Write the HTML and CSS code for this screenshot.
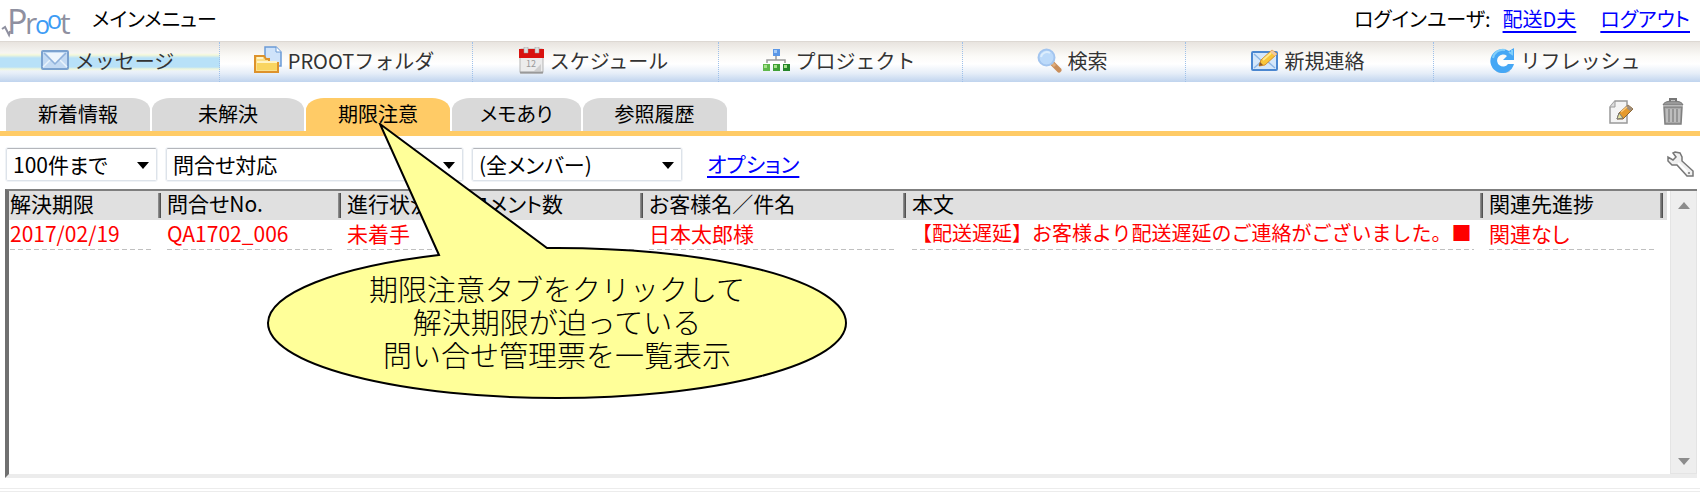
FILE: index.html
```html
<!DOCTYPE html>
<html lang="ja">
<head>
  <meta charset="UTF-8">
  <meta name="viewport" content="width=device-width, initial-scale=1.0">
  <title>Proot メインメニュー</title>
  <link rel="stylesheet" href="styles.css">
</head>
<body>
  <header class="header">
    <svg class="logo" width="72" height="36" viewBox="0 0 72 36">
      <path d="M2 28l3-2 4 8 1-4" fill="none" stroke="#8f90a0" stroke-width="2"/>
      <text x="7" y="33" font-size="34" class="logo-gray">P</text>
      <text x="25" y="33" font-size="30" class="logo-gray">r</text>
      <text x="35" y="33" font-size="25" class="logo-blue">o</text>
      <text x="47" y="28" font-size="25" class="logo-blue">o</text>
      <text x="60" y="33" font-size="30" class="logo-gray">t</text>
    </svg>
    <h1>メインメニュー</h1>
    <div class="user">
      <span>ログインユーザ:</span>
      <a href="#">配送D夫</a>
      <a href="#" class="logout">ログアウト</a>
    </div>
  </header>

  <!-- Main menu -->
  <nav class="menu">
    <a href="#" class="active">
      <svg width="28" height="20" viewBox="0 0 28 20">
        <rect x="1" y="1" width="26" height="18" rx="1" fill="#c3daf3" stroke="#7ba2cf" stroke-width="2"/>
        <path d="M2 17l8-8M26 17l-8-8" stroke="#e9f3fc" stroke-width="1.500"/>
        <path d="M5 3h18l-9 10z" fill="#eef6fd"/>
        <path d="M3 3l11 11L25 3" fill="none" stroke="#8fb1da" stroke-width="1.500"/>
      </svg>
      メッセージ
    </a>
    <a href="#">
      <svg width="28" height="28" viewBox="0 0 28 28">
        <path d="M11 1h11l5 5v14H11z" fill="#cfe3fa" stroke="#6b9bd6" stroke-width="1.500"/>
        <path d="M22 1v5h5" fill="#fff" stroke="#6b9bd6"/>
        <path d="M1 26V10h9l2 3h3v4h9v9z" fill="#fbe08a" stroke="#dd922b" stroke-width="2"/>
        <path d="M3 12h6M3 16h20" stroke="#fff3c4" stroke-width="2"/>
        <path d="M3 17h20v7H3z" fill="#f9d560"/>
      </svg>
      PROOTフォルダ
    </a>
    <a href="#">
      <svg width="25" height="27" viewBox="0 0 25 27">
        <rect x="1" y="2" width="23" height="24" rx="1" fill="#ececec" stroke="#b5b5b5"/>
        <path d="M0 2h25v9H0z" fill="#d9120f"/>
        <path d="M5 0h4v6H5zM16 0h4v6h-4z" fill="#ddd" stroke="#999" stroke-width=".5"/>
        <text x="7" y="20" font-size="9" fill="#999">12</text>
        <path d="M15 24l7-7v7z" fill="#cfcfcf"/>
        <path d="M1 25.500h23" stroke="#999" stroke-width="2"/>
      </svg>
      スケジュール
    </a>
    <a href="#">
      <svg width="28" height="24" viewBox="0 0 28 24">
        <path d="M14 8v4M5 15v-3h18v3" fill="none" stroke="#999" stroke-width="1.500"/>
        <rect x="11" y="1" width="7" height="7" fill="#5b97e6"/>
        <rect x="12" y="2" width="3" height="3" fill="#a5cbf7"/>
        <path d="M1 16h7v7H1z" fill="#5fb84a"/>
        <path d="M11 16h7v7h-7z" fill="#3fa035"/>
        <path d="M21 16h7v7h-7z" fill="#24852a"/>
        <path d="M2 17h3v3H2zM12 17h3v3h-3zM22 17h3v3h-3z" fill="#a7e08e"/>
      </svg>
      プロジェクト
    </a>
    <a href="#">
      <svg width="25" height="25" viewBox="0 0 25 25">
        <path d="M15 15l7 7" stroke="#c98e5b" stroke-width="5" stroke-linecap="round"/>
        <path d="M15 15l3 3" stroke="#e0ad7b" stroke-width="3"/>
        <circle cx="9.500" cy="9.500" r="8" fill="#bcdafa" stroke="#a3c5ef" stroke-width="2"/>
        <path d="M4 9a6 6 0 0 1 9-4" fill="none" stroke="#dcedfd" stroke-width="2"/>
      </svg>
      検索
    </a>
    <a href="#">
      <svg width="28" height="24" viewBox="0 0 28 24">
        <rect x="1" y="4" width="25" height="18" rx="1" fill="#d5e7fa" stroke="#4b87d0" stroke-width="2"/>
        <path d="M3 6l10 9L24 6M3 20l8-7M24 20l-8-7" fill="none" stroke="#8db6e6" stroke-width="1.500"/>
        <path d="M8 18l2-6L21 2l5 4-12 11z" fill="#f8c53a" stroke="#d48d2f"/>
        <path d="M21 2l5 4-2 2-5-4z" fill="#f0c9a5"/>
        <path d="M8 18l1-4 3 3z" fill="#8d5a2e"/>
        <path d="M12 12l8-7" stroke="#ffe98c" stroke-width="2"/>
      </svg>
      新規連絡
    </a>
    <a href="#">
      <svg width="25" height="26" viewBox="0 0 25 26">
        <ellipse cx="13" cy="24" rx="7" ry="2" fill="#c5ccd4"/>
        <path d="M24 1v12H13l4-4a6 6 0 1 0 1 8h6A12 12 0 1 1 19 4z" fill="#45a7f5"/>
        <path d="M22 3v4l-3-2M3 11a10 10 0 0 1 12-8" fill="none" stroke="#82cffa" stroke-width="2"/>
      </svg>
      リフレッシュ
    </a>
  </nav>

  <!-- Tabs -->
  <div class="tab-bar">
    <div class="tabs">
      <button type="button" class="tab">新着情報</button>
      <button type="button" class="tab tab-wide">未解決</button>
      <button type="button" class="tab selected">期限注意</button>
      <button type="button" class="tab tab-narrow">メモあり</button>
      <button type="button" class="tab">参照履歴</button>
    </div>
    <div class="tools">
      <button type="button" class="icon-button" aria-label="編集">
        <svg width="26" height="26" viewBox="0 0 26 26">
          <path d="M7 2h12v22H2V8z" fill="#f4f4f4" stroke="#999" stroke-width="1.500"/>
          <path d="M7 2v6H2" fill="#ddd" stroke="#999"/>
          <path d="M9 20l2-6 9-8 5 4-10 10z" fill="#e59a2c" stroke="#8a6430"/>
          <path d="M20 6l5 4-3 2-5-4z" fill="#9d8d7d"/>
          <path d="M9 20l2-6 4 5z" fill="#e5e5a0" stroke="#777"/>
          <path d="M13 13l6-5" stroke="#ffc977" stroke-width="1.500"/>
        </svg>
      </button>
      <button type="button" class="icon-button" aria-label="削除">
        <svg width="22" height="28" viewBox="0 0 22 28">
          <path d="M8 4V1h6v3" fill="none" stroke="#777" stroke-width="2"/>
          <path d="M1 7q1-4 10-4t10 4z" fill="#999" stroke="#777"/>
          <path d="M2 9h18l-1 17H3z" fill="#aaa" stroke="#808080" stroke-width="1.500"/>
          <path d="M7 11v13M11 11v13M15 11v13" stroke="#808080"/>
          <path d="M5 11v13M9 11v13M13 11v13M17 11v13" stroke="#d0d0d0"/>
        </svg>
      </button>
    </div>
  </div>

  <!-- Filters -->
  <div class="filters">
    <label class="select select-limit">
      <select aria-label="件数"><option>100件まで</option></select>
    </label>
    <label class="select select-type">
      <select aria-label="種別"><option>問合せ対応</option></select>
    </label>
    <label class="select select-member">
      <select aria-label="メンバー"><option>(全メンバー)</option></select>
    </label>
    <a href="#" class="option-link">オプション</a>
    <button type="button" class="icon-button settings" aria-label="設定">
      <svg width="27" height="27" viewBox="0 0 27 27">
        <path d="M8 1l5 1 2 4v4l11 10v5h-6L10 14H5l-4-4V6l5 3 3-3-3-4z" fill="#f0f0f0" stroke="#777" stroke-width="1.500"/>
        <path d="M11 12l9 9" stroke="#fff" stroke-width="2"/>
        <circle cx="22" cy="22" r="1" fill="#777"/>
      </svg>
    </button>
  </div>

  <!-- List -->
  <main class="list">
    <div class="list-body">
      <table>
        <thead>
          <tr>
            <th class="col-limit">解決期限</th>
            <th class="col-no">問合せNo.</th>
            <th class="col-status">進行状況</th>
            <th class="col-comment">コメント数</th>
            <th class="col-name">お客様名／件名</th>
            <th>本文</th>
            <th class="col-related">関連先進捗</th>
          </tr>
        </thead>
        <tbody>
          <tr>
            <td><div>2017/02/19</div></td>
            <td><div>QA1702_006</div></td>
            <td><div>未着手</div></td>
            <td><div></div></td>
            <td><div>日本太郎様</div></td>
            <td><div class="message">【配送遅延】お客様より配送遅延のご連絡がございました。■</div></td>
            <td><div>関連なし</div></td>
          </tr>
        </tbody>
      </table>
    </div>
    <div class="scrollbar">
      <span class="arrow-up"></span>
      <span class="arrow-down"></span>
    </div>
  </main>
  <footer class="footer"></footer>

  <!-- Callout over the list -->
  <div class="callout">
    <svg width="582" height="278" viewBox="0 0 582 278">
      <path d="M114 1L281 125A289 75 0 0 1 580 200A289 75 0 0 1 2 200A289 75 0 0 1 173 132Z" fill="#ffff99" stroke="#000" stroke-width="2"/>
    </svg>
    <p>期限注意タブをクリックして<br>解決期限が迫っている<br>問い合せ管理票を一覧表示</p>
  </div>
</body>
</html>
```

FILE: styles.css
```css
:root {
  --text-color: #000;
  --link-color: #0000ff;
  --alert-color: #ff0000;
  --tab-bg: #d9d9d9;
  --accent: #ffcb66;
  --head-bg: #e0e0e0;
}

* {
  box-sizing: border-box;
}

body {
  display: flex;
  flex-direction: column;
  position: relative;
  min-height: 100vh;
  margin: 0;
  background: #fff;
  color: var(--text-color);
  font-family: "Noto Sans CJK JP", sans-serif;
  font-size: 20px;
  font-feature-settings: "palt";
}

a {
  color: var(--link-color);
  text-decoration-thickness: 2px;
  text-underline-offset: 4px;
}

button, select {
  font: inherit;
  font-feature-settings: inherit;
  color: inherit;
}

/* Header */
.header {
  display: flex;
  align-items: center;
  height: 41px;
  padding: 0 10px 4px 0;
}

.logo {
  overflow: visible;
  font-family: "Open Sans", sans-serif;
}

.logo-gray {
  fill: #8f90a0;
}

.logo-blue {
  fill: #3d9cf5;
}

.header h1 {
  margin: 0 0 0 20px;
  font-size: 20px;
  font-weight: 400;
}

.user {
  display: flex;
  gap: 12px;
  margin-left: auto;
}

.logout {
  margin-left: 12px;
}

/* Main menu */
.menu {
  display: grid;
  grid-template-columns: 220fr 253fr 246fr 244fr 223fr 248fr 266fr;
  height: 41px;
  border-top: 1px solid #ddd8d3;
  background: linear-gradient(#e8e4df, #fbfaf7 35%, #fff 55%, #e6eef8 78%, #c0d4ee);
  font-feature-settings: normal;
}

.menu a {
  display: flex;
  align-items: center;
  justify-content: center;
  gap: 6px;
  padding: 0 4px 4px 0;
  border-right: 1px dotted #9fc1ea;
  color: #333;
  text-decoration: none;
}

.menu a:last-child {
  border-right: none;
}

.menu .active {
  background: linear-gradient(transparent 11px, #f4f8d8 13px, #b8e1f8 16px, #b8e1f8 25px, #eef6da 27px, transparent 29px);
}

/* Tabs */
.tab-bar {
  display: flex;
  align-items: flex-end;
  justify-content: space-between;
  height: 54px;
  padding: 0 16px 0 6px;
  border-bottom: 5px solid var(--accent);
}

.tabs {
  display: flex;
  gap: 2px;
}

.tab {
  height: 33px;
  padding: 0 32px 2px;
  border: none;
  border-radius: 18px 18px 0 0 / 12px 12px 0 0;
  background: var(--tab-bg);
  line-height: 31px;
  cursor: pointer;
}

.tab-wide {
  padding: 0 46px 2px;
}

.tab-narrow {
  padding: 0 28px 2px;
}

.tab.selected {
  background: var(--accent);
}

.tools {
  display: flex;
  align-items: center;
  gap: 28px;
  padding-bottom: 5px;
}

.icon-button {
  display: flex;
  padding: 0;
  border: none;
  background: none;
  cursor: pointer;
}

/* Filters */
.filters {
  display: flex;
  align-items: center;
  gap: 9px;
  padding: 12px 6px 8px;
  font-size: 21px;
}

.select {
  position: relative;
}

.select select {
  display: block;
  width: 100%;
  height: 33px;
  padding: 0 28px 1px 6px;
  border: 1px solid #dde3ea;
  border-top-color: #b4b6bb;
  border-radius: 2px;
  outline: 1px solid #f0f3f6;
  appearance: none;
  background: #fff;
}

.select::after {
  content: "";
  position: absolute;
  top: 14px;
  right: 8px;
  border: 6px solid transparent;
  border-top: 7px solid #000;
  border-bottom: none;
  pointer-events: none;
}

.select-limit {
  width: 151px;
}

.select-type {
  width: 297px;
}

.select-member {
  width: 210px;
}

.option-link {
  margin-left: 16px;
  padding-bottom: 3px;
}

.settings {
  margin-left: auto;
}

/* List */
.list {
  display: flex;
  flex: 1;
  margin: 0 3px 0 5px;
  border: solid;
  border-width: 2px 0 4px 4px;
  border-color: #7f7f7f #ececec #ececec #707070;
}

.list-body {
  flex: 1;
}

table {
  width: 100%;
  border-collapse: collapse;
  table-layout: fixed;
  font-size: 21px;
}

thead {
  background: var(--head-bg);
}

th {
  position: relative;
  height: 29px;
  padding: 0 0 4px 6px;
  font-weight: 400;
  line-height: 25px;
  text-align: left;
  white-space: nowrap;
}

/* column divider */
th::after {
  content: "";
  position: absolute;
  top: 2px;
  right: 0;
  bottom: 2px;
  width: 3px;
  background: linear-gradient(90deg, #999, #444);
}

th:last-child::after {
  right: 4px;
}

td {
  padding: 0 9px 0 6px;
  color: var(--alert-color);
  line-height: 26px;
  white-space: nowrap;
}

th:first-child, td:first-child {
  padding-left: 1px;
}

td:last-child {
  padding-right: 13px;
}

td div {
  height: 30px;
  background: repeating-linear-gradient(90deg, #c0c0c0 0 5px, transparent 5px 8px) bottom / 100% 1px no-repeat;
}

.message {
  font-size: 20px;
  font-feature-settings: normal;
}

.col-limit {
  width: 152px;
}

.col-no {
  width: 180px;
}

.col-status {
  width: 122px;
}

.col-comment {
  width: 180px;
}

.col-name {
  width: 263px;
}

.col-related {
  width: 184px;
}

.scrollbar {
  display: flex;
  flex-direction: column;
  align-items: center;
  justify-content: space-between;
  width: 27px;
  margin-left: 3px;
  padding: 11px 0 8px;
  border: 1px solid #e4e4e4;
  border-top: none;
  background: #eee;
}

.arrow-up, .arrow-down {
  border: 6px solid transparent;
}

.arrow-up {
  border-top: none;
  border-bottom: 7px solid #8c8c8c;
}

.arrow-down {
  border-top: 7px solid #8c8c8c;
  border-bottom: none;
}

.footer {
  height: 4px;
  margin: 10px 0 0;
  border: solid #ececec;
  border-width: 1px 0;
}

/* Callout */
.callout {
  position: absolute;
  top: 123px;
  left: 266px;
}

.callout svg {
  display: block;
}

.callout p {
  position: absolute;
  top: 149px;
  left: 0;
  width: 100%;
  margin: 0;
  font-size: 29px;
  font-weight: 300;
  line-height: 33px;
  text-align: center;
  white-space: nowrap;
  font-feature-settings: normal;
}
```
